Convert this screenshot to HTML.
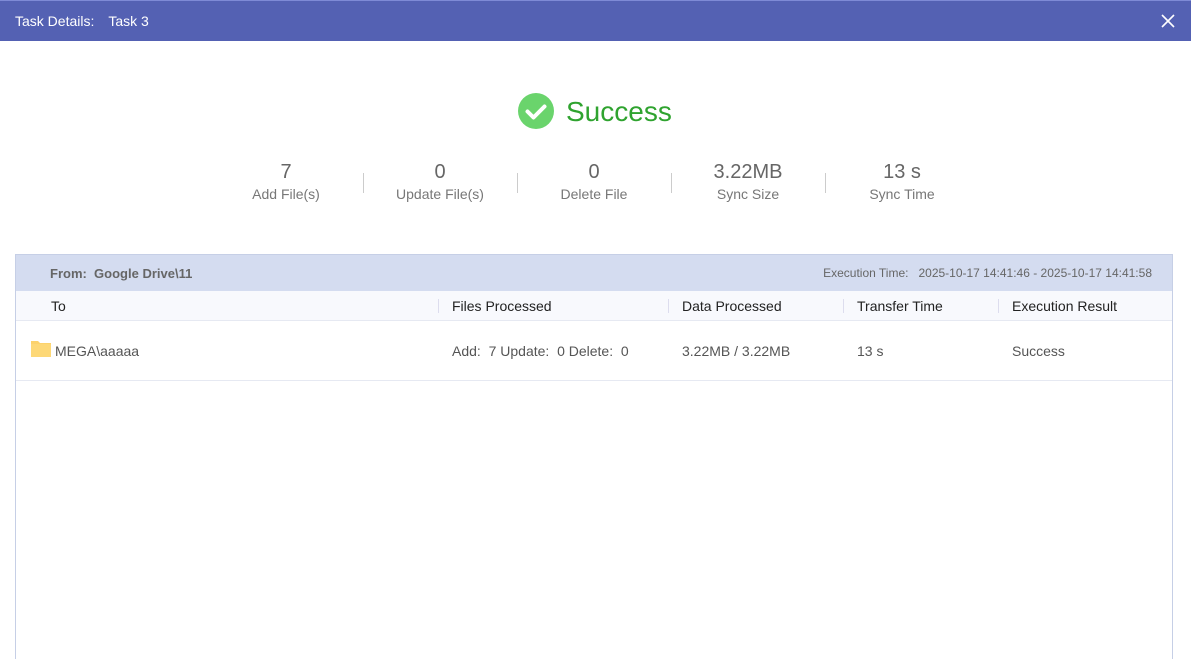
<!DOCTYPE html>
<html><head><meta charset="utf-8"><style>
*{margin:0;padding:0;box-sizing:border-box}
html,body{width:1191px;height:659px;overflow:hidden}
body{background:#fff;font-family:"Liberation Sans",sans-serif;position:relative}
.hdr{position:absolute;left:0;top:0;width:1191px;height:41px;background:#5461b3;border-top:1px solid #7e8ad6}
.hdr .t{position:absolute;left:15px;top:12px;color:#fff;font-size:14px;white-space:nowrap}
.abs{position:absolute;white-space:nowrap}
.stat{position:absolute;top:160px;width:154px;text-align:center}
.stat .n{font-size:20px;color:#666;line-height:24px}
.stat .l{font-size:14px;color:#777;line-height:20px}
.sep{position:absolute;top:173px;width:1px;height:20px;background:#ccc}
.box{position:absolute;left:15px;top:254px;width:1158px;height:405px;border:1px solid #c6cfe6;border-bottom:0}
.band{position:absolute;left:0;top:0;width:100%;height:36px;background:#d4dcf0}
.ch{position:absolute;left:0;top:36px;width:100%;height:30px;background:#f8f9fd;border-bottom:1px solid #e6e9f2}
.row{position:absolute;left:0;top:66px;width:100%;height:60px;border-bottom:1px solid #e6e9f2}
.hs{position:absolute;top:8px;width:1px;height:14px;background:#dde}
</style></head><body>
<div class="hdr"><div class="t">Task Details:<span style="display:inline-block;width:14px"></span>Task 3</div>
<svg class="abs" style="left:1161px;top:13px" width="14" height="14" viewBox="0 0 14 14"><path d="M1 1L13 13M13 1L1 13" stroke="#fff" stroke-width="1.6"/></svg></div>
<svg class="abs" style="left:518px;top:93px" width="36" height="36" viewBox="0 0 36 36"><circle cx="18" cy="18" r="18" fill="#6ad46c"/><path d="M9.5 18.5l6 6 11-11" stroke="#fff" stroke-width="4" fill="none" stroke-linecap="round" stroke-linejoin="round"/></svg>
<div class="abs" style="left:566px;top:96px;font-size:28px;color:#2fa32f">Success</div>
<div class="stat" style="left:209px"><div class="n">7</div><div class="l">Add File(s)</div></div>
<div class="stat" style="left:363px"><div class="n">0</div><div class="l">Update File(s)</div></div>
<div class="stat" style="left:517px"><div class="n">0</div><div class="l">Delete File</div></div>
<div class="stat" style="left:671px"><div class="n">3.22MB</div><div class="l">Sync Size</div></div>
<div class="stat" style="left:825px"><div class="n">13 s</div><div class="l">Sync Time</div></div>
<div class="sep" style="left:363px"></div><div class="sep" style="left:517px"></div><div class="sep" style="left:671px"></div><div class="sep" style="left:825px"></div>
<div class="box">
<div class="band"><div class="abs" style="left:34px;top:11px;font-size:13px;font-weight:bold;color:#666">From:&nbsp;&nbsp;Google Drive\11</div>
<div class="abs" style="right:20px;top:11px;font-size:12px;color:#666">Execution Time:&nbsp;&nbsp;&nbsp;2025-10-17 14:41:46 - 2025-10-17 14:41:58</div></div>
<div class="ch" style="font-size:14px;color:#222">
<div class="abs" style="left:35px;top:7px">To</div>
<div class="hs" style="left:422px"></div><div class="abs" style="left:436px;top:7px">Files Processed</div>
<div class="hs" style="left:652px"></div><div class="abs" style="left:666px;top:7px">Data Processed</div>
<div class="hs" style="left:827px"></div><div class="abs" style="left:841px;top:7px">Transfer Time</div>
<div class="hs" style="left:982px"></div><div class="abs" style="left:996px;top:7px">Execution Result</div>
</div>
<div class="row" style="font-size:14px;color:#555">
<svg class="abs" style="left:15px;top:19px" width="20" height="17" viewBox="0 0 20 17"><path d="M0 1h7l2 2h11v14H0z" fill="#fcd26c"/><rect x="0" y="4" width="20" height="13" fill="#fdd877"/></svg>
<div class="abs" style="left:39px;top:22px">MEGA\aaaaa</div>
<div class="abs" style="left:436px;top:22px">Add:&nbsp;&nbsp;7 Update:&nbsp;&nbsp;0 Delete:&nbsp;&nbsp;0</div>
<div class="abs" style="left:666px;top:22px">3.22MB / 3.22MB</div>
<div class="abs" style="left:841px;top:22px">13 s</div>
<div class="abs" style="left:996px;top:22px">Success</div>
</div>
</div>
</body></html>
